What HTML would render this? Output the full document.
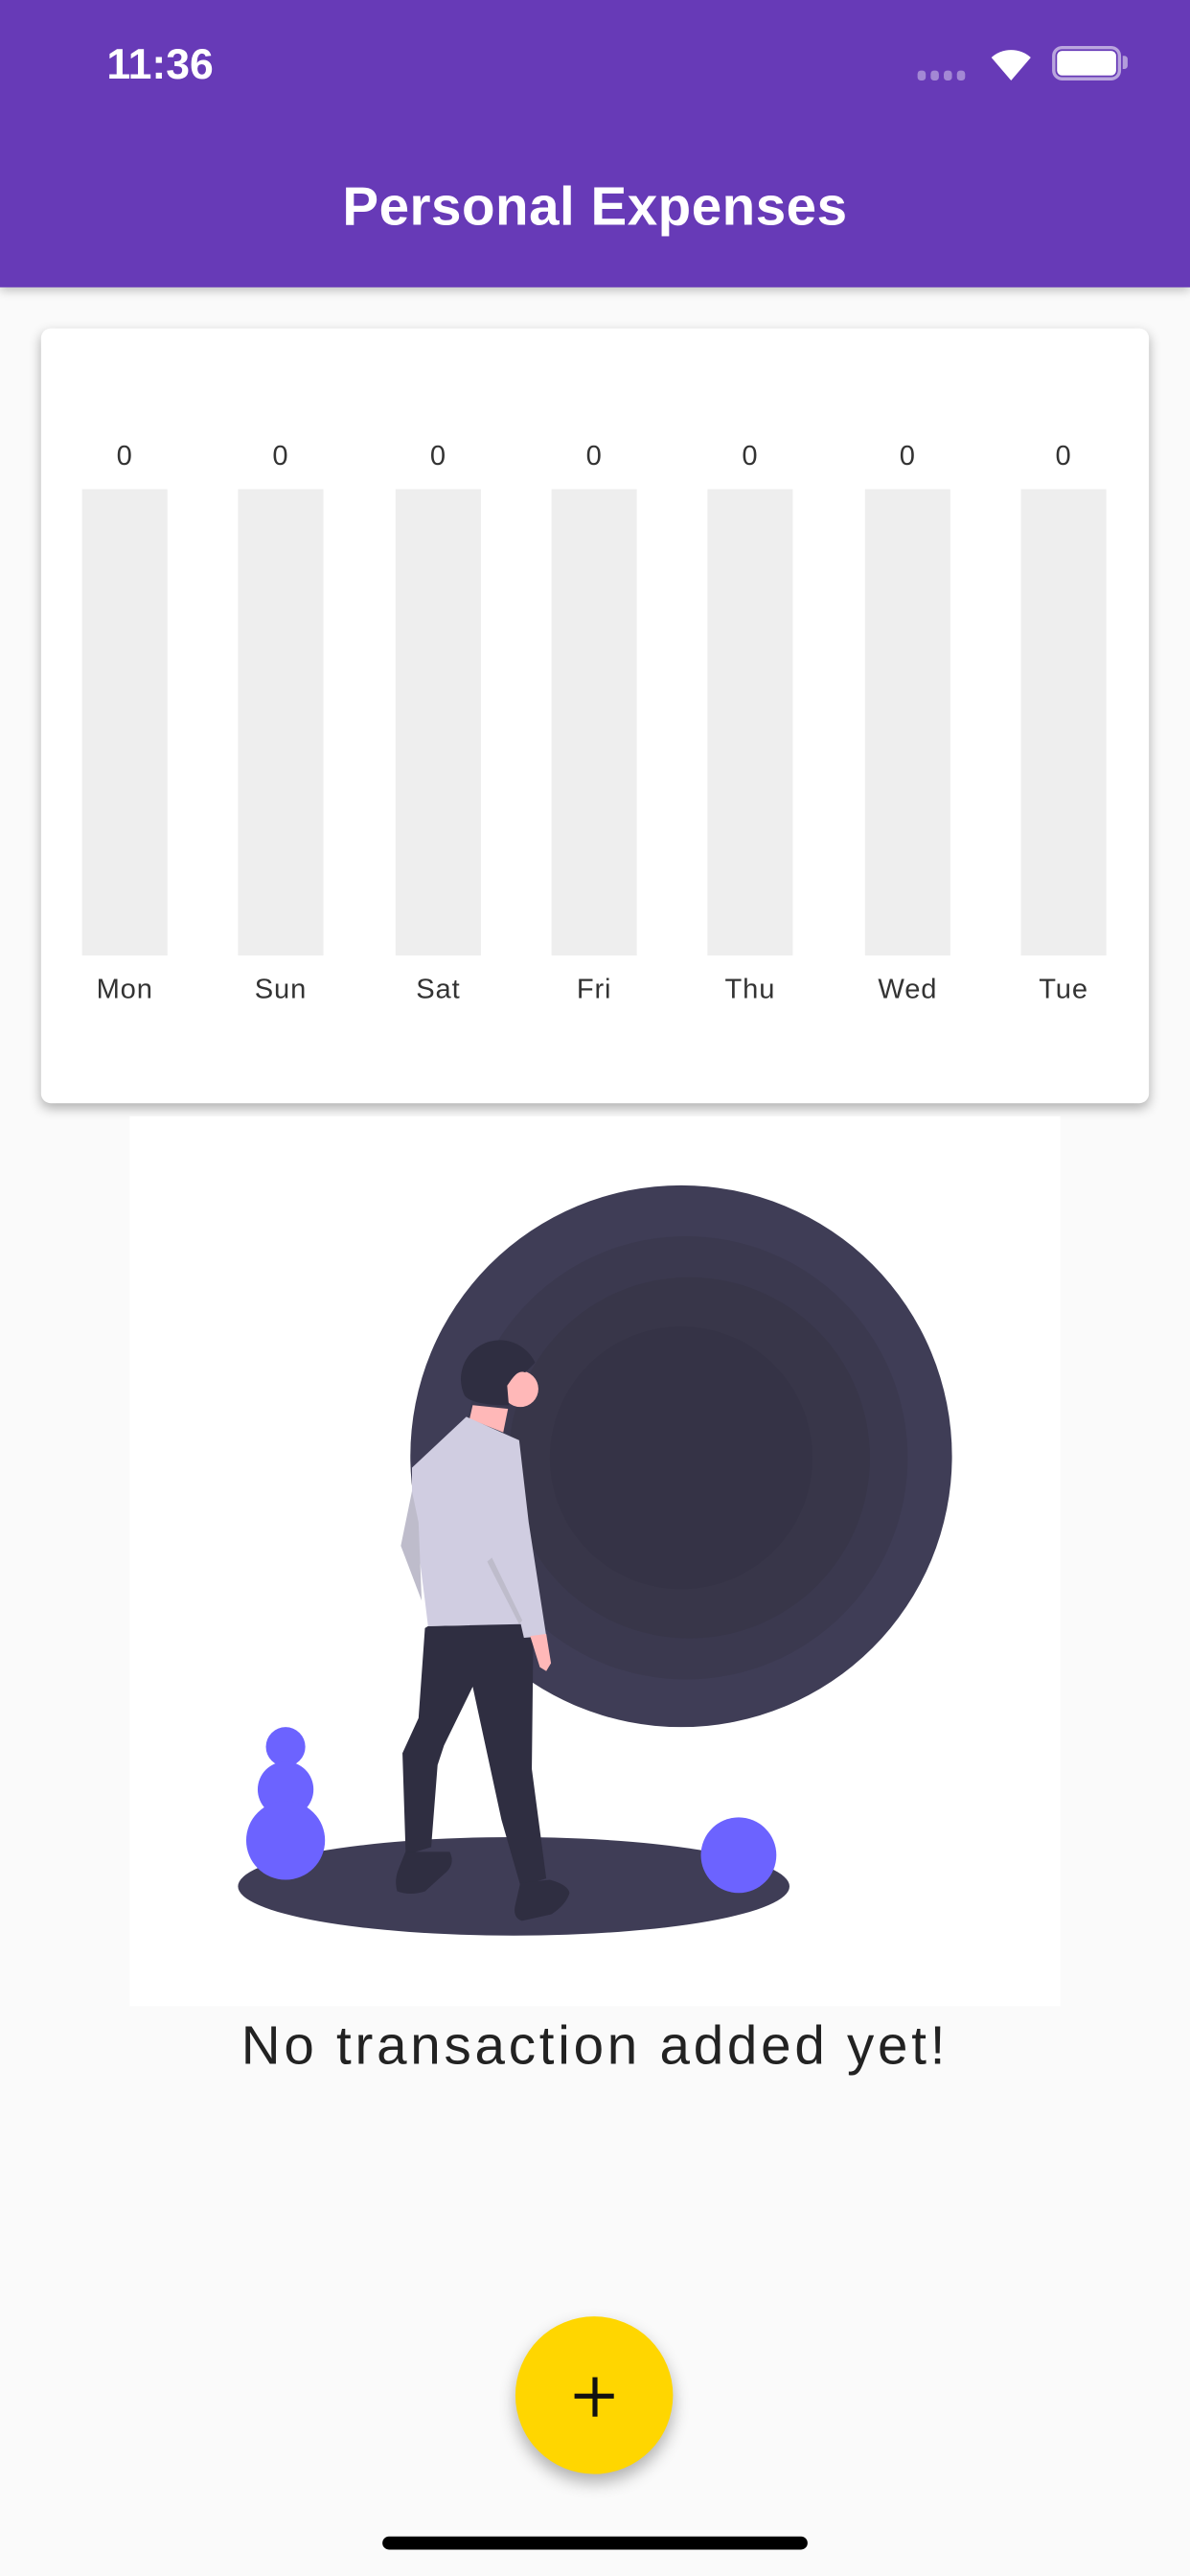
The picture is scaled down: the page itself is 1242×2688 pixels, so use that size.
<!DOCTYPE html>
<html><head><meta charset="utf-8"><style>
html,body{margin:0;padding:0;width:1242px;height:2688px;overflow:hidden;background:#FAFAFA;}
#w{position:absolute;left:0;top:0;width:725px;height:1569px;transform:scale(1.71310);transform-origin:0 0;font-family:"Liberation Sans",sans-serif;}
.bar{position:absolute;top:298px;width:52px;height:284px;background:#EEEEEE;}
.v,.d{position:absolute;width:80px;text-align:center;font-size:17px;color:#333;letter-spacing:0.5px}
.v{top:268px}.d{top:593px}
</style></head><body><div id="w">
<div style="position:absolute;left:0;top:0;width:725px;height:175px;background:#673AB7;box-shadow:0 2px 6px rgba(0,0,0,.25)"></div>
<div style="position:absolute;left:65px;top:24px;color:#fff;font-size:26px;font-weight:bold;letter-spacing:0px">11:36</div>
<div style="position:absolute;left:559px;top:43px;width:32px;height:6px">
<span style="position:absolute;left:0;width:5px;height:6px;border-radius:2px;background:rgba(255,255,255,.4)"></span><span style="position:absolute;left:8px;width:5px;height:6px;border-radius:2px;background:rgba(255,255,255,.4)"></span><span style="position:absolute;left:16px;width:5px;height:6px;border-radius:2px;background:rgba(255,255,255,.4)"></span><span style="position:absolute;left:24px;width:5px;height:6px;border-radius:2px;background:rgba(255,255,255,.4)"></span></div>
<svg style="position:absolute;left:602px;top:28px" width="28" height="22" viewBox="0 0 28 22"><path d="M14 21 L2 7 A18 18 0 0 1 26 7 Z" fill="#fff"/></svg>
<div style="position:absolute;left:641px;top:28px;width:42px;height:21px;border:2px solid rgba(255,255,255,.55);border-radius:6px;box-sizing:border-box"></div>
<div style="position:absolute;left:644px;top:31px;width:36px;height:15px;background:#fff;border-radius:3px"></div>
<div style="position:absolute;left:684px;top:34px;width:3px;height:8px;background:rgba(255,255,255,.5);border-radius:0 2px 2px 0"></div>
<div style="position:absolute;left:0;width:725px;top:107px;text-align:center;color:#fff;font-size:33px;font-weight:bold;letter-spacing:0.3px">Personal Expenses</div>

<div style="position:absolute;left:25px;top:200px;width:675px;height:472px;background:#fff;border-radius:6px;box-shadow:0 3px 7px rgba(0,0,0,.3)"></div>
<div class="bar" style="left:50px"></div><div class="bar" style="left:145px"></div><div class="bar" style="left:241px"></div><div class="bar" style="left:336px"></div><div class="bar" style="left:431px"></div><div class="bar" style="left:527px"></div><div class="bar" style="left:622px"></div>
<div class="v" style="left:36px">0</div><div class="v" style="left:131px">0</div><div class="v" style="left:227px">0</div><div class="v" style="left:322px">0</div><div class="v" style="left:417px">0</div><div class="v" style="left:513px">0</div><div class="v" style="left:608px">0</div>
<div class="d" style="left:36px">Mon</div><div class="d" style="left:131px">Sun</div><div class="d" style="left:227px">Sat</div><div class="d" style="left:322px">Fri</div><div class="d" style="left:417px">Thu</div><div class="d" style="left:513px">Wed</div><div class="d" style="left:608px">Tue</div>

<svg style="position:absolute;left:0;top:0" width="725" height="1569">
<rect x="79" y="680" width="567" height="542" fill="#fff"/>
<circle cx="415" cy="887" r="165" fill="#3F3D56"/>
<circle cx="418" cy="888" r="135" fill="#3B394F"/>
<circle cx="420" cy="888" r="110" fill="#383649"/>
<circle cx="415" cy="888" r="80" fill="#353346"/>
<ellipse cx="313" cy="1149" rx="168" ry="30" fill="#3F3D56"/>
<circle cx="174" cy="1064" r="12" fill="#6C63FF"/>
<circle cx="174" cy="1090" r="17" fill="#6C63FF"/>
<circle cx="174" cy="1121" r="24" fill="#6C63FF"/>
<circle cx="450" cy="1130" r="23" fill="#6C63FF"/>
<polygon points="288,855.9 309.5,858.2 306.6,872.5 286.1,864.2" fill="#FFB8B8"/>
<polygon points="260.8,990.5 325,989.3 324,1077.5 332.8,1144.2 317.2,1149 305.5,1108.4 288,1027.4 270.5,1063.2 266.6,1075.1 262.7,1125.1 247.2,1129.9 245.2,1067.9 255,1046.5 258.9,991.7" fill="#2F2E41"/>
<path d="M247,1128 L274,1128 Q278,1136 270,1142 L259,1152 Q250,1155 242,1152 Q240,1145 243,1138 Z" fill="#2F2E41"/>
<path d="M317,1147 L335,1145 Q346,1148 347,1153 Q345,1160 336,1166 L318,1170 Q312,1168 314,1160 Z" fill="#2F2E41"/>
<polygon points="251,894 284.1,863 316.3,877.3 322.1,927.3 332.8,996.5 319.2,997.6 317.3,989.3 260.8,990.5 258.9,975 251,913" fill="#D0CDE1"/>
<polygon points="251,908.3 244.2,941.6 256.9,975 255,927.4" fill="#BEBCCB"/>
<polygon points="296.8,951.2 299.7,948.8 318.2,987 316.3,989.3" fill="#BEBCCB"/>
<polygon points="323,996.5 332.8,995.3 335.7,1013.1 332.8,1017.9 328.9,1015.5" fill="#FFB8B8"/>
<circle cx="317" cy="846" r="11" fill="#FFB8B8"/>
<path d="M283,850 A21,21 0 0 1 326,830 L320,836 C315,834 312,840 309,844 L310,856 C296,856 286,854 283,850 Z" fill="#2F2E41"/>
</svg>

<div style="position:absolute;left:0;width:725px;top:1227px;text-align:center;font-size:33px;color:#222;letter-spacing:2.2px">No transaction added yet!</div>
<div style="position:absolute;left:314px;top:1411px;width:96px;height:96px;border-radius:50%;background:#FFD600;box-shadow:0 5px 10px rgba(0,0,0,.3)"></div>
<div style="position:absolute;left:350px;top:1458px;width:24px;height:3px;background:#111"></div>
<div style="position:absolute;left:360.5px;top:1447.5px;width:3px;height:24px;background:#111"></div>
<div style="position:absolute;left:233px;top:1545px;width:259px;height:8px;border-radius:4px;background:#000"></div>
</div></body></html>
